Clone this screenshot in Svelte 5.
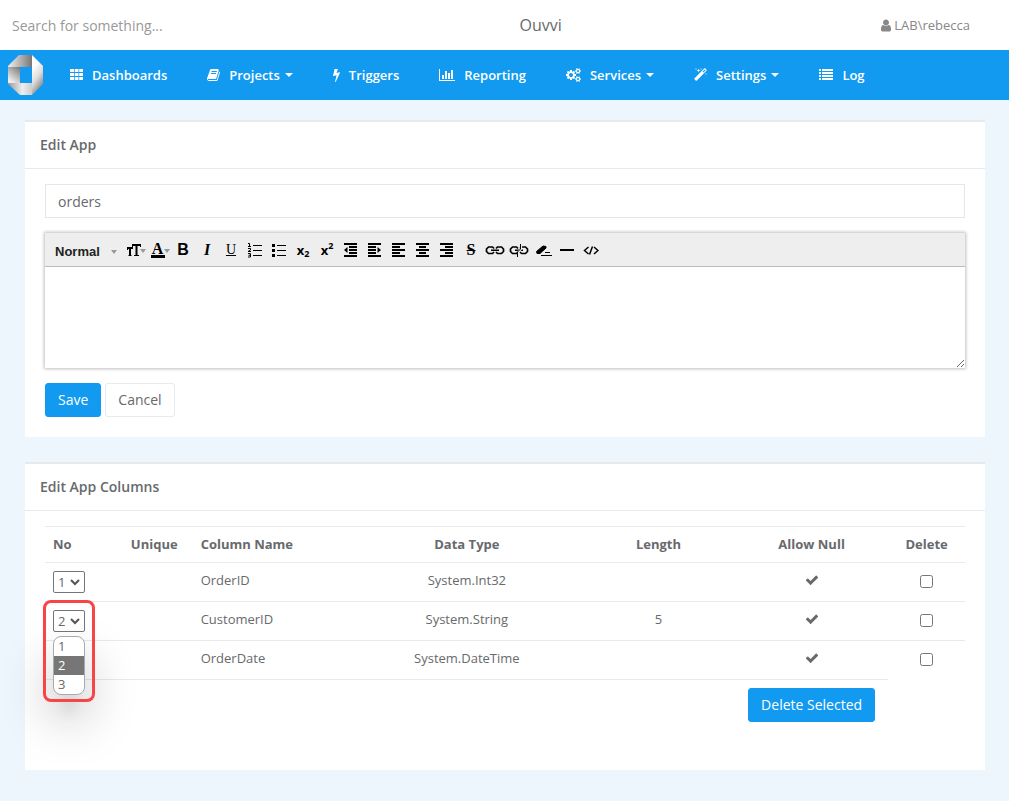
<script lang="ts">
	type NavItem = {
		label: string;
		box: string;
		width: number;
		path: string;
		menu?: boolean;
	};

	type Column = {
		no: number;
		name: string;
		type: string;
		length: string;
		open?: boolean;
	};

	const cog =
		'v140q0 16-149 31-12 27-30 52 51 113 51 138 0 4-4 7-122 71-124 71-8 0-46-47t-52-68q-20 2-30 2t-30-2q-14 21-52 68t-46 47q-2 0-124-71-4-3-4-7 0-25 51-138-18-25-30-52-149-15-149-31v-140q0-16 149-31 13-29 30-52-51-113-51-138 0-4 4-7 4-2 35-20t59-34 30-16q8 0 46 46.5t52 67.5q20-2 30-2t30 2q51-71 92-112l6-2q4 0 124 70 4 3 4 7 0 25-51 138 17 23 30 52 149 15 149 31z';

	const chain =
		'M9 6.500L7.500 5H3.500L1.500 7v2.500l2 2h4L9 10M11 6.500L12.500 5h4l2 2v2.500l-2 2h-4L11 10M6 8.250h8';

	const navItems: NavItem[] = [
		{
			label: 'Dashboards',
			box: '0 0 13 14',
			width: 13,
			path: 'M0 1h4v3H0zM4.7 1h3.8v3H4.7zM9.2 1H13v3H9.2zM0 5h4v3H0zM4.7 5h3.8v3H4.7zM9.2 5H13v3H9.2zM0 9h4v3H0zM4.7 9h3.8v3H4.7zM9.2 9H13v3H9.2z'
		},
		{
			label: 'Projects',
			box: '64 0 1664 1792',
			width: 13,
			menu: true,
			path: 'M1703 478q40 57 18 129l-275 906q-19 64-76.5 107.5t-122.5 43.5h-923q-77 0-148.5-53.5t-99.5-131.5q-24-67-2-127 0-4 3-27t4-37q1-8-3-21.5t-3-19.5q2-11 8-21t16.5-23.5 16.5-23.5q23-38 45-91.5t30-91.5q3-10 .5-30t-.5-28q3-11 17-28t17-23q21-36 42-92t25-90q1-9-2.5-32t.5-28q4-13 22-30.5t22-22.5q19-26 42.5-84.5t27.5-96.5q1-8-3-25.5t-2-26.5q2-8 9-18t18-23 17-21q8-12 16.5-30.5t15-35 16-36 19.5-32 26.5-23.5 36-11.5 47.5 5.5l-1 3q38-9 51-9h761q74 0 114 56t18 130l-274 906q-36 119-71.5 153.5t-128.5 34.5h-869q-27 0-38 15-11 16-1 43 24 70 144 70h923q29 0 56-15.5t35-41.5l300-987q7-22 5-57 38 15 59 43zm-1064 2q-4 13 2 22.5t20 9.5h608q13 0 25.5-9.5t16.5-22.5l21-64q4-13-2-22.5t-20-9.5h-608q-13 0-25.5 9.5t-16.5 22.5zm-83 256q-4 13 2 22.5t20 9.5h608q13 0 25.5-9.5t16.5-22.5l21-64q4-13-2-22.5t-20-9.5h-608q-13 0-25.5 9.5t-16.5 22.5z'
		},
		{
			label: 'Triggers',
			box: '448 0 896 1792',
			width: 7,
			path: 'M1333 566q18 20 7 44l-540 1157q-13 25-42 25-4 0-14-2-17-5-25.5-19t-4.5-30l197-808-406 101q-4 1-12 1-18 0-31-11-18-15-13-39l201-825q4-16 16-26t28-10h328q19 0 32 12.5t13 29.5q0 8-5 18l-171 463 396-98q8-2 12-2 19 0 34 15z'
		},
		{
			label: 'Reporting',
			box: '0 0 2048 1792',
			width: 16,
			path: 'M640 896v512h-256v-512h256zm384-512v1024h-256v-1024h256zm1024 1152v128h-2048v-1536h128v1408h1920zm-640-896v768h-256v-768h256zm384-384v1152h-256v-1152h256z'
		},
		{
			label: 'Services',
			box: '0 0 1920 1792',
			width: 15,
			menu: true,
			path:
				'M896 896q0-106-75-181t-181-75-181 75-75 181 75 181 181 75 181-75 75-181zm768 512q0-52-38-90t-90-38-90 38-38 90q0 53 37.5 90.5t90.5 37.5 90.5-37.5 37.5-90.5zm0-1024q0-52-38-90t-90-38-90 38-38 90q0 53 37.5 90.5t90.5 37.5 90.5-37.5 37.5-90.5zm-384 421v185q0 10-7 19.5t-16 10.5l-155 24q-11 35-32 76 34 48 90 115 7 11 7 20 0 12-7 19-23 30-82.5 89.5t-78.5 59.5q-11 0-21-7l-115-90q-37 19-77 31-11 108-23 155-7 24-30 24h-186q-11 0-20-7.5t-10-17.5l-23-153q-34-10-75-31l-118 89q-7 7-20 7-11 0-21-8-144-133-144-160 0-9 7-19 10-14 41-53t47-61q-23-44-35-82l-152-24q-10-1-17-9.5t-7-19.5v-185q0-10 7-19.5t16-10.5l155-24q11-35 32-76-34-48-90-115-7-11-7-20 0-12 7-20 22-30 82-89t79-59q11 0 21 7l115 90q34-18 77-32 11-108 23-154 7-24 30-24h186q11 0 20 7.5t10 17.5l23 153q34 10 75 31l118-89q8-7 20-7 11 0 21 8 144 133 144 160 0 8-7 19-12 16-42 54t-45 60q23 48 34 82l152 23q10 2 17 10.5t7 19.5z' +
				'M1920 1338' +
				cog +
				'M1920 314' +
				cog
		},
		{
			label: 'Settings',
			box: '64 0 1664 1792',
			width: 13,
			menu: true,
			path: 'M1254 581l293-293-107-107-293 293zm447-293q0 27-18 45l-1286 1286q-18 18-45 18t-45-18l-198-198q-18-18-18-45t18-45l1286-1286q18-18 45-18t45 18l198 198q18 18 18 45zm-1351-190l98 30-98 30-30 98-30-98-98-30 98-30 30-98zm350 162l196 60-196 60-60 196-60-196-196-60 196-60 60-196zm930 478l98 30-98 30-30 98-30-98-98-30 98-30 30-98zm-640-640l98 30-98 30-30 98-30-98-98-30 98-30 30-98z'
		},
		{
			label: 'Log',
			box: '0 0 14 14',
			width: 14,
			path: 'M0 1h2v2H0zM3 1h11v2H3zM0 4h2v2H0zM3 4h11v2H3zM0 7h2v2H0zM3 7h11v2H3zM0 10h2v2H0zM3 10h11v2H3z'
		}
	];

	// indent and alignment icons, bars on a 3px rhythm
	const bars = [
		{ label: 'Decrease indent', path: 'M1 2h13M6 5h8M6 8h8M6 11h8M1 14h13', arrow: 'M4.500 5v6L1 8z' },
		{ label: 'Increase indent', path: 'M1 2h13M1 5h8M1 8h8M1 11h8M1 14h13', arrow: 'M10.500 5v6L14 8z' },
		{ label: 'Align left', path: 'M1 2h13M1 5h8M1 8h13M1 11h8M1 14h13', arrow: '' },
		{ label: 'Align center', path: 'M1 2h13M4 5h7M1 8h13M4 11h7M1 14h13', arrow: '' },
		{ label: 'Align right', path: 'M1 2h13M6 5h8M1 8h13M6 11h8M1 14h13', arrow: '' }
	];

	const numbers = [1, 2, 3];

	const columns: Column[] = [
		{ no: 1, name: 'OrderID', type: 'System.Int32', length: '' },
		{ no: 2, name: 'CustomerID', type: 'System.String', length: '5', open: true },
		{ no: 3, name: 'OrderDate', type: 'System.DateTime', length: '' }
	];

	let appName = $state('orders');
	let description = $state('');
</script>

<svelte:head>
	<title>Ouvvi</title>
</svelte:head>

<header class="topbar">
	<input class="search" type="text" placeholder="Search for something..." aria-label="Search" />
	<span class="brand">Ouvvi</span>
	<a class="user" href="#user">
		<svg width="10" height="13" viewBox="256 128 1280 1536" aria-hidden="true">
			<path
				d="M1536 1399q0 109-62.5 187t-150.5 78h-854q-88 0-150.5-78t-62.5-187q0-85 8.5-160.5t31.5-152 58.5-131 94-89 134.5-34.5q131 128 313 128t313-128q76 0 134.5 34.5t94 89 58.5 131 31.5 152 8.5 160.5zm-256-887q0 159-112.5 271.5t-271.5 112.5-271.5-112.5-112.5-271.5 112.5-271.5 271.5-112.5 271.5 112.5 112.5 271.5z"
			/>
		</svg>
		LAB\rebecca
	</a>
</header>

<nav class="navbar">
	<a class="logo" href="#home" aria-label="Home">
		<svg width="35" height="40" viewBox="0 0 35 40">
			<defs>
				<linearGradient id="top">
					<stop offset="0.1" stop-color="#e4e4e4" />
					<stop offset="1" stop-color="#777" />
				</linearGradient>
				<linearGradient id="right" x1="0" y1="0" x2="0.4" y2="1">
					<stop offset="0.3" stop-color="#fff" />
					<stop offset="0.65" stop-color="#ddd" />
					<stop offset="1" stop-color="#888" />
				</linearGradient>
				<linearGradient id="left" x1="1" y1="0" x2="0.4" y2="1">
					<stop offset="0" stop-color="#777" />
					<stop offset="1" stop-color="#eee" />
				</linearGradient>
				<linearGradient id="bottom">
					<stop offset="0" stop-color="#999" />
					<stop offset="0.6" stop-color="#eee" />
					<stop offset="1" stop-color="#ccc" />
				</linearGradient>
			</defs>
			<path fill="url(#top)" d="M11 0h13v12H0v-1z" />
			<path fill="url(#left)" d="M0 12h12v16H0z" />
			<path fill="url(#bottom)" d="M0 28h24v12H12L0 29z" />
			<path fill="url(#right)" d="M24 0l11 11v18L24 40z" />
		</svg>
	</a>
	{#each navItems as item}
		<a class="nav-link" href={'#' + item.label.toLowerCase()}>
			<svg width={item.width} height="14" viewBox={item.box} aria-hidden="true">
				<path d={item.path} />
			</svg>
			<span>{item.label}</span>
			{#if item.menu}<i class="caret"></i>{/if}
		</a>
	{/each}
</nav>

<main class="wrapper">
	<section class="ibox">
		<h5>Edit App</h5>
		<div class="content">
			<input class="form-control" type="text" aria-label="App name" bind:value={appName} />

			<div class="editor">
				<div class="toolbar">
					<button type="button" class="format">Normal <i class="tick"></i></button>
					<button type="button" aria-label="Font size">
						<svg width="20" height="18" viewBox="0 0 20 18">
							<path d="M2 7h6M5 7v7" stroke="#000" stroke-width="2" />
							<path d="M2.500 6v3M3.500 14.500h3" stroke="#000" />
							<path d="M7 4h9M11.500 4v10" stroke="#000" stroke-width="2" />
							<path d="M7.500 3v3M15.500 3v3M9 14.500h5" stroke="#000" />
						</svg>
						<i class="tick side"></i>
					</button>
					<button type="button" class="colour" aria-label="Text colour">
						<span>A</span><i class="tick side"></i>
					</button>
					<button type="button" class="bold">B</button>
					<button type="button" class="italic">I</button>
					<button type="button" class="under">U</button>
					<button type="button" aria-label="Ordered list">
						<svg width="16" height="16" viewBox="0 0 16 16">
							<path
								d="M6 3.500h9M6 8.500h9M6 13.500h9M1 1.500h1.500v3M1 4.500h3M1 6.500h2.500v1.500L1 9.500h3M1 11.500h2.500v3.500H1M1.500 13.250h2"
								stroke="#000"
							/>
						</svg>
					</button>
					<button type="button" aria-label="Bullet list">
						<svg width="16" height="16" viewBox="0 0 16 16">
							<path d="M6 3.500h9M6 8.500h9M6 13.500h9" stroke="#000" />
							<path d="M1 2h3v3H1zM1 7h3v3H1zM1 12h3v3H1z" fill="#000" />
						</svg>
					</button>
					<button type="button" class="script" aria-label="Subscript">x<sub>2</sub></button>
					<button type="button" class="script" aria-label="Superscript">x<sup>2</sup></button>
					{#each bars as icon}
						<button type="button" aria-label={icon.label}>
							<svg width="16" height="16" viewBox="0 0 16 16">
								<path d={icon.path} stroke="#000" stroke-width="2" />
								<path d={icon.arrow} fill="#000" />
							</svg>
						</button>
					{/each}
					<button type="button" class="strike">S</button>
					<button type="button" aria-label="Link">
						<svg width="20" height="16" viewBox="0 0 20 16">
							<path d={chain} stroke="#000" stroke-width="1.700" />
						</svg>
					</button>
					<button type="button" aria-label="Unlink">
						<svg width="20" height="16" viewBox="0 0 20 16">
							<path d={chain} stroke="#000" stroke-width="1.700" />
							<path d="M12 2v5l-3 3v5" stroke="#eee" stroke-width="2" />
							<path d="M11.500 2v5l-3 3v5" stroke="#000" />
						</svg>
					</button>
					<button type="button" aria-label="Clear formatting">
						<svg width="18" height="16" viewBox="0 0 18 16">
							<path d="M2.500 9.500L9 4l3 .5v1.500L6 11.500H3z" fill="#000" stroke="#000" />
							<path d="M11 10.500h5M7 13.500h11" stroke="#000" />
						</svg>
					</button>
					<button type="button" aria-label="Horizontal line">
						<svg width="16" height="16" viewBox="0 0 16 16">
							<path d="M1 8h14" stroke="#000" stroke-width="2" />
						</svg>
					</button>
					<button type="button" aria-label="Source">
						<svg width="16" height="16" viewBox="0 0 16 16">
							<path
								d="M5.500 5L1.500 8.500 5.500 12M11 5l4 3.500L11 12M9.500 4.500l-3 8"
								stroke="#000"
								stroke-width="1.500"
							/>
						</svg>
					</button>
				</div>
				<textarea aria-label="Description" bind:value={description}></textarea>
			</div>

			<div class="actions">
				<button type="button" class="btn primary">Save</button>
				<button type="button" class="btn">Cancel</button>
			</div>
		</div>
	</section>

	<section class="ibox">
		<h5>Edit App Columns</h5>
		<div class="content">
			<table>
				<thead>
					<tr>
						<th class="col-no">No</th>
						<th class="col-unique mid">Unique</th>
						<th class="col-name">Column Name</th>
						<th class="col-type mid">Data Type</th>
						<th class="col-length mid">Length</th>
						<th class="col-null mid">Allow Null</th>
						<th class="col-delete mid">Delete</th>
					</tr>
				</thead>
				<tbody>
					{#each columns as column}
						<tr>
							<td>
								<div class="picker">
									<select aria-label={'Position of ' + column.name} value={column.no}>
										{#each numbers as n}
											<option value={n}>{n}</option>
										{/each}
									</select>
									<svg class="chevron" width="10" height="8" viewBox="0 0 10 8" aria-hidden="true">
										<path d="M1 2l4 4 4-4" stroke="#555" stroke-width="2" />
									</svg>
									{#if column.open}
										<ul class="popup">
											{#each numbers as n}
												<li class:selected={n === column.no}>{n}</li>
											{/each}
										</ul>
										<div class="marker"></div>
									{/if}
								</div>
							</td>
							<td></td>
							<td>{column.name}</td>
							<td class="mid">{column.type}</td>
							<td class="mid">{column.length}</td>
							<td class="mid">
								<svg class="check" width="14" height="14" viewBox="0 0 1792 1792" role="img" aria-label="Yes">
									<path
										d="M1671 566q0 40-28 68l-724 724-136 136q-28 28-68 28t-68-28l-136-136-362-362q-28-28-28-68t28-68l136-136q28-28 68-28t68 28l294 295 656-657q28-28 68-28t68 28l136 136q28 28 28 68z"
									/>
								</svg>
							</td>
							<td class="mid"><input type="checkbox" aria-label={'Delete ' + column.name} /></td>
						</tr>
					{/each}
				</tbody>
				<tfoot>
					<tr>
						<td colspan="5"></td>
						<td class="mid"><button type="button" class="btn primary">Delete Selected</button></td>
						<td class="blank"></td>
					</tr>
				</tfoot>
			</table>
		</div>
	</section>
</main>

<style>
	:global(body) {
		margin: 0;
		background: #edf5fd;
		color: #676a6c;
		font-family: 'Open Sans', 'Liberation Sans', sans-serif;
		font-size: 13px;
		line-height: 19px;
	}

	:global(*) {
		box-sizing: border-box;
	}

	button,
	input,
	select,
	textarea {
		font-family: inherit;
		color: inherit;
	}

	a {
		text-decoration: none;
		color: inherit;
	}

	svg {
		fill: none;
		flex: none;
	}

	.topbar {
		display: flex;
		align-items: center;
		justify-content: space-between;
		height: 50px;
		padding-right: 39px;
		background: #fff;
	}

	.search {
		width: 200px;
		height: 50px;
		padding: 0 12px;
		border: 0;
		background: none;
		font-size: 14px;
	}

	.search::placeholder {
		color: #999;
	}

	.brand {
		font-size: 16px;
	}

	.user {
		display: flex;
		align-items: center;
		gap: 3px;
		color: #888;
	}

	.user svg {
		fill: #888;
	}

	.navbar {
		display: flex;
		align-items: center;
		height: 50px;
		background: #119af0;
		color: #fff;
		font-weight: 600;
	}

	.logo {
		width: 50px;
		height: 40px;
		padding-left: 8px;
	}

	.nav-link {
		display: flex;
		align-items: center;
		padding: 0 20px;
	}

	.nav-link svg {
		margin-right: 9px;
		fill: #fff;
	}

	.caret {
		margin-left: 5px;
		border: 4px solid transparent;
		border-top-color: #fff;
		border-bottom: 0;
	}

	.wrapper {
		padding: 20px 24px 31px 25px;
	}

	.ibox {
		margin-bottom: 25px;
		border-top: 2px solid #e7eaec;
		background: #fff;
	}

	.ibox:last-child {
		margin-bottom: 0;
	}

	h5 {
		margin: 0;
		padding: 13px 15px 14px;
		border-bottom: 1px solid #e7eaec;
		font-size: 14px;
		font-weight: 600;
	}

	.content {
		padding: 15px 20px 20px;
	}

	.form-control {
		display: block;
		width: 100%;
		height: 34px;
		padding: 6px 12px;
		border: 1px solid #e5e6e7;
		font-size: 14px;
	}

	.editor {
		margin: 15px 0;
		box-shadow: 0 0 3px 1px rgba(0, 0, 0, 0.25);
	}

	.toolbar {
		display: flex;
		align-items: center;
		height: 34px;
		padding-left: 10px;
		border-bottom: 1px solid #bbb;
		background: #eee;
	}

	.toolbar button {
		position: relative;
		display: flex;
		align-items: center;
		justify-content: center;
		width: 24px;
		height: 24px;
		padding: 0;
		border: 0;
		background: none;
		color: #000;
		font-size: 16px;
		line-height: 16px;
	}

	.toolbar .format {
		justify-content: space-between;
		width: 68px;
		padding: 4px 6px 0 0;
		font-family: 'Liberation Sans', Arial, sans-serif;
		font-size: 13px;
		font-weight: 700;
		color: #222;
	}

	.tick {
		border: 3px solid transparent;
		border-top: 4px solid #999;
		border-bottom: 0;
	}

	.side {
		position: absolute;
		top: 11px;
		right: 1px;
	}

	.toolbar .colour,
	.toolbar .italic,
	.toolbar .under,
	.toolbar .strike {
		font-family: 'Liberation Serif', 'Times New Roman', serif;
	}

	.colour span {
		width: 14px;
		height: 16px;
		margin-right: 3px;
		border-bottom: 3px solid #000;
		line-height: 13px;
		font-weight: 700;
	}

	.toolbar .bold {
		font-family: 'Liberation Sans', Arial, sans-serif;
		font-weight: 700;
	}

	.toolbar .italic {
		font-style: italic;
		font-weight: 700;
	}

	.toolbar .under {
		font-size: 14px;
		text-decoration: underline;
	}

	.toolbar .strike {
		font-weight: 700;
		text-decoration: line-through;
	}

	.toolbar .script {
		font-size: 13px;
		font-weight: 700;
	}

	sub,
	sup {
		font-size: 9px;
		line-height: 10px;
	}

	sub {
		margin-top: 8px;
	}

	sup {
		margin-bottom: 8px;
	}

	textarea {
		display: block;
		width: 100%;
		height: 101px;
		padding: 12px;
		border: 0;
		outline: 0;
		resize: vertical;
		font-size: 13px;
	}

	.actions {
		display: flex;
		gap: 4px;
	}

	.btn {
		height: 34px;
		padding: 0 12px 2px;
		border: 1px solid #e7eaec;
		border-radius: 3px;
		background: #fff;
		font-size: 14px;
		white-space: nowrap;
	}

	.primary {
		border-color: #119af0;
		background: #119af0;
		color: #fff;
	}

	table {
		width: 100%;
		margin-bottom: 20px;
		border-collapse: separate;
		border-spacing: 0;
		table-layout: fixed;
	}

	th,
	td {
		padding: 8px;
		border-top: 1px solid #e7eaec;
		text-align: left;
		vertical-align: top;
	}

	th {
		font-weight: 700;
	}

	.mid {
		text-align: center;
	}

	.blank {
		border-top: 0;
	}

	.col-no {
		width: 7.7%;
	}

	.col-unique,
	.col-delete {
		width: 8.35%;
	}

	.col-type {
		width: 25%;
	}

	.col-length,
	.col-null {
		width: 16.65%;
	}

	.picker {
		position: relative;
		width: 32px;
		height: 22px;
	}

	select {
		display: block;
		width: 32px;
		height: 22px;
		padding: 0 4px;
		border: 1px solid #767676;
		border-radius: 2px;
		appearance: none;
		background: #fff;
		font-size: 13px;
	}

	.chevron {
		position: absolute;
		top: 7px;
		right: 5px;
		pointer-events: none;
	}

	.popup {
		position: absolute;
		z-index: 2;
		top: 26px;
		left: 0;
		width: 32px;
		margin: 0;
		padding: 0;
		overflow: hidden;
		border: 1px solid #aaa;
		border-radius: 8px;
		background: #fff;
		box-shadow:
			0 32px 14px -14px rgba(0, 0, 0, 0.2),
			0 24px 50px rgba(0, 0, 0, 0.28);
		list-style: none;
	}

	.popup li {
		padding-left: 4px;
	}

	.selected {
		background: #767676;
		color: #fff;
	}

	.marker {
		position: absolute;
		z-index: 3;
		top: -10px;
		left: -10px;
		width: 52px;
		height: 102px;
		border: 3px solid #f84444;
		border-radius: 8px;
		pointer-events: none;
	}

	.check {
		display: block;
		margin: 2px auto 0;
		fill: #676a6c;
	}

	input[type='checkbox'] {
		display: block;
		width: 13px;
		height: 13px;
		margin: 4px auto 0;
	}
</style>
